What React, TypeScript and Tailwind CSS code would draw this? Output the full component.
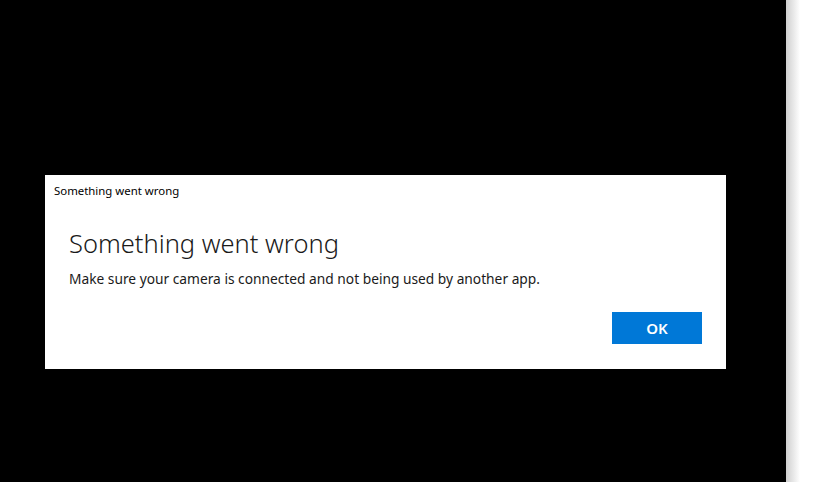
export default function App() {
  return (
    <div className="flex h-[482px] w-[828px] overflow-hidden bg-white font-['Noto_Sans',sans-serif]">
      <div className="h-full w-[786px] shrink-0 bg-black pl-[45px] pt-[175px]">
        <div className="flex h-[194px] w-[681px] flex-col bg-white">
          <div className="pl-[9px] pt-[8px] text-[11.4px] leading-[16px] text-black">
            Something went wrong
          </div>
          <div className="pl-[24px] pt-[28px] text-[25.5px] font-light leading-[32px] text-[#1a1a1a]">
            Something went wrong
          </div>
          <div className="pl-[24px] pt-[10px] text-[13.75px] leading-[20px] text-[#1a1a1a]">
            Make sure your camera is connected and not being used by another app.
          </div>
          <div className="flex justify-end pr-[24px] pt-[23px]">
            <button className="h-[32px] w-[90px] bg-[#0078d7] text-[15px] font-semibold text-white">
              OK
            </button>
          </div>
        </div>
      </div>
      <div className="h-full w-[14px] shrink-0 bg-gradient-to-r from-[#cfcfcf] to-white" />
    </div>
  );
}
